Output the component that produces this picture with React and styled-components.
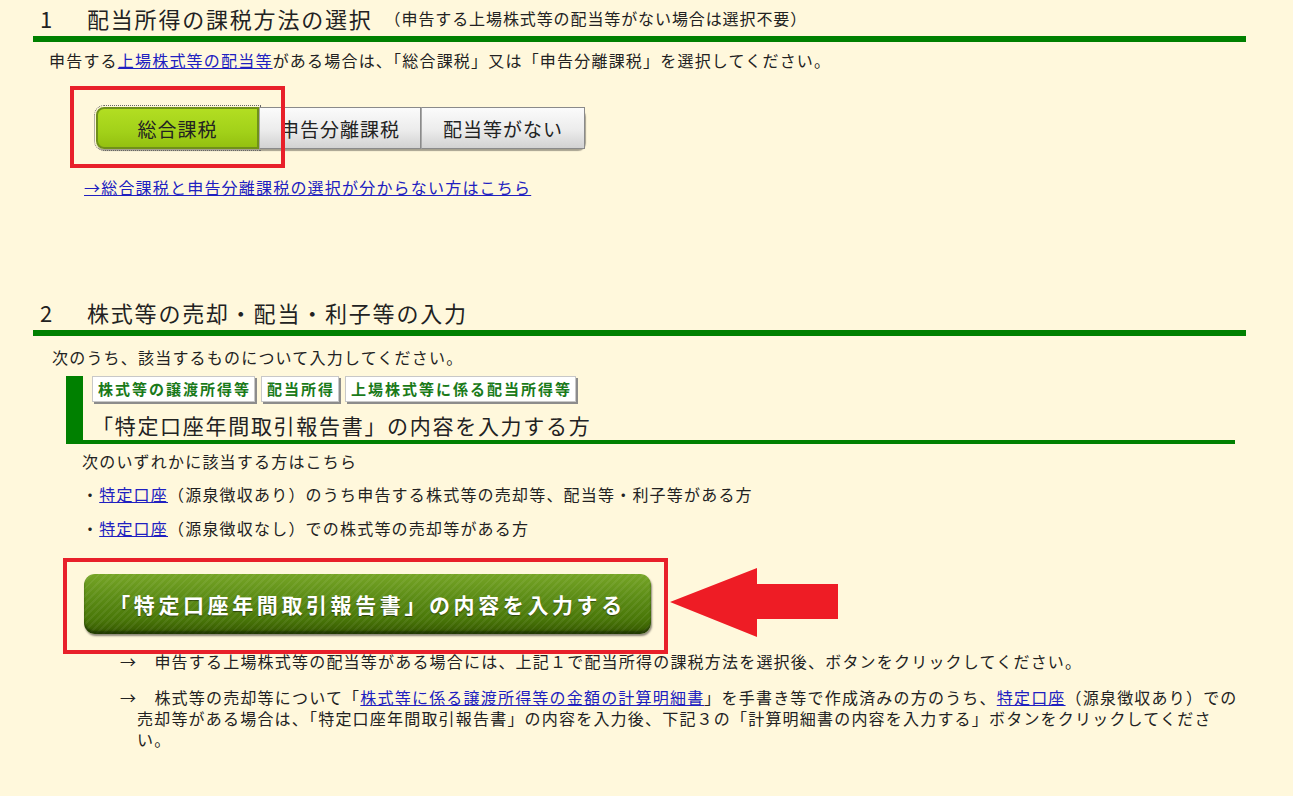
import React from 'react';
import styled, { createGlobalStyle } from 'styled-components';

const GlobalStyle = createGlobalStyle`
    html, body {
        margin: 0;
        background: #fff8dc;
    }
    body {
        font-family: 'Noto Sans CJK JP', 'Noto Sans', sans-serif;
        color: #222;
    }
`;

const Page = styled.div`
    width: 1213px;
    margin-left: 33px;
    min-height: 796px;
`;
const SectionHeading = styled.h2`
    display: flex;
    align-items: center;
    margin: ${(props) => props.$top || 0}px 0 0;
    height: 36px;
    padding-left: 7px;
    font-size: 22px;
    font-weight: normal;
    letter-spacing: 1.8px;
    white-space: nowrap;
`;
const Num = styled.span`
    display: inline-block;
    width: 47px;
`;
const HeadNote = styled.span`
    margin-left: 12px;
    font-size: 16px;
    letter-spacing: 0.9px;
`;
const GreenBar = styled.div`
    height: 6px;
    background: #008000;
`;
const Text = styled.p`
    margin: ${(props) => props.$top || 0}px 0 0 ${(props) => props.$indent || 0}px;
    font-size: 16px;
    line-height: 24px;
    letter-spacing: 1.2px;
    white-space: nowrap;
`;
const Link = styled.a`
    color: #2020c0;
    text-decoration: underline;
    cursor: pointer;
`;
const ChoiceRow = styled.div`
    display: flex;
    margin: 35px 0 0 63px;
`;
const ChoiceGroup = styled.div`
    position: relative;
    display: inline-flex;
    border-radius: 8px;
    box-shadow: 1px 2px 1px rgba(0, 0, 0, 0.35);
`;
const Choice = styled.button`
    all: unset;
    box-sizing: border-box;
    width: ${(props) => props.$width}px;
    height: 42px;
    text-align: center;
    font-family: 'Noto Sans CJK JP', sans-serif;
    font-size: 19px;
    letter-spacing: 1px;
    color: #222;
    border: 1px solid #8a8a8a;
    border-left-color: #a8a8a8;
    background: linear-gradient(#fbfbfb 0%, #ececec 55%, #d2d2d2 100%);
    cursor: pointer;
    &:first-child {
        border-radius: 8px 0 0 8px;
        border-left-color: #8a8a8a;
    }
    &:last-child {
        border-radius: 0 8px 8px 0;
    }
    &[aria-pressed='true'] {
        background: linear-gradient(#b2de22, #a2d119 60%, #94c010);
        border: 2px solid #70901a;
        outline: 1px dotted #666;
        outline-offset: 1px;
    }
`;
const Frame = styled.div`
    position: absolute;
    left: ${(props) => props.$x}px;
    top: ${(props) => props.$y}px;
    width: ${(props) => props.$w}px;
    height: ${(props) => props.$h}px;
    box-sizing: border-box;
    border: 4px solid #e8202a;
    pointer-events: none;
`;
const SubBlock = styled.div`
    box-sizing: border-box;
    width: 1169px;
    margin: 7px 0 0 33px;
    padding-left: 9px;
    border-left: 17px solid #008000;
    border-bottom: 4px solid #008000;
`;
const TagRow = styled.div`
    display: flex;
    gap: 6px;
    height: 28px;
`;
const Tag = styled.span`
    display: inline-block;
    height: 24px;
    padding: 0 3px 0 5px;
    line-height: 24px;
    background: #fff;
    border: 1px solid #c8c8c8;
    box-shadow: 2px 2px 0 #8c8c8c;
    color: #1a7a1a;
    font-size: 15px;
    font-weight: bold;
    letter-spacing: 2px;
`;
const BlockTitle = styled.div`
    padding-top: 6px;
    font-size: 21px;
    line-height: 30px;
    letter-spacing: 1.7px;
`;
const ButtonWrap = styled.div`
    position: relative;
    width: 567px;
    margin: 34px 0 0 51px;
`;
const BigButton = styled.button`
    all: unset;
    box-sizing: border-box;
    display: block;
    width: 567px;
    height: 60px;
    text-align: center;
    font-family: 'Noto Sans CJK JP', sans-serif;
    font-size: 21px;
    font-weight: bold;
    letter-spacing: 3.6px;
    color: #fff;
    text-shadow: 0 1px 1px rgba(0, 0, 0, 0.45);
    border-radius: 11px;
    background:
        repeating-linear-gradient(135deg, rgba(255, 255, 255, 0.06) 0 2px, transparent 2px 5px),
        linear-gradient(#76a526 0%, #5c8c16 40%, #497708 75%, #345500 100%);
    box-shadow: inset 0 -3px 2px rgba(20, 40, 0, 0.6), 1px 2px 2px rgba(0, 0, 0, 0.45);
    cursor: pointer;
`;
const Arrow = styled.svg`
    position: absolute;
    left: 586px;
    top: -6px;
`;
const Note = styled.p`
    box-sizing: border-box;
    width: ${(props) => props.$width || 1108}px;
    margin: ${(props) => props.$top}px 0 0 ${(props) => props.$indent}px;
    font-size: 16px;
    line-height: ${(props) => props.$line || 24}px;
    letter-spacing: 1.2px;
    text-indent: ${(props) => props.$hang || 0}px;
`;

const choices = [
    { label: '総合課税', width: 163, selected: true },
    { label: '申告分離課税', width: 162 },
    { label: '配当等がない', width: 164 },
];

function App() {
    return (
        <>
            <GlobalStyle />
            <Page>
                <SectionHeading>
                    <Num>1</Num>
                    配当所得の課税方法の選択
                    <HeadNote>（申告する上場株式等の配当等がない場合は選択不要）</HeadNote>
                </SectionHeading>
                <GreenBar />
                <Text $top={6} $indent={16}>
                    申告する<Link>上場株式等の配当等</Link>がある場合は、「総合課税」又は「申告分離課税」を選択してください。
                </Text>
                <ChoiceRow>
                    <ChoiceGroup>
                        {choices.map((c) => (
                            <Choice key={c.label} $width={c.width} aria-pressed={c.selected ? 'true' : 'false'}>
                                {c.label}
                            </Choice>
                        ))}
                        <Frame $x={-26} $y={-21} $w={215} $h={82} />
                    </ChoiceGroup>
                </ChoiceRow>
                <Text $top={26} $indent={51}>
                    <Link>→総合課税と申告分離課税の選択が分からない方はこちら</Link>
                </Text>

                <SectionHeading $top={95}>
                    <Num>2</Num>
                    株式等の売却・配当・利子等の入力
                </SectionHeading>
                <GreenBar />
                <Text $top={9} $indent={19}>
                    次のうち、該当するものについて入力してください。
                </Text>
                <SubBlock>
                    <TagRow>
                        <Tag>株式等の譲渡所得等</Tag>
                        <Tag>配当所得</Tag>
                        <Tag>上場株式等に係る配当所得等</Tag>
                    </TagRow>
                    <BlockTitle>「特定口座年間取引報告書」の内容を入力する方</BlockTitle>
                </SubBlock>
                <Text $top={5} $indent={49}>
                    次のいずれかに該当する方はこちら
                </Text>
                <Text $top={9} $indent={49}>
                    ・<Link>特定口座</Link>（源泉徴収あり）のうち申告する株式等の売却等、配当等・利子等がある方
                </Text>
                <Text $top={10} $indent={49}>
                    ・<Link>特定口座</Link>（源泉徴収なし）での株式等の売却等がある方
                </Text>
                <ButtonWrap>
                    <BigButton>「特定口座年間取引報告書」の内容を入力する</BigButton>
                    <Frame $x={-21} $y={-16} $w={605} $h={96} />
                    <Arrow width="168" height="70" viewBox="0 0 168 70">
                        <polygon points="0,34 87,0 87,16 168,16 168,51 87,51 87,69" fill="#ee1c25" />
                    </Arrow>
                </ButtonWrap>
                <Note $top={15} $indent={87} $width={1150}>
                    →　申告する上場株式等の配当等がある場合には、上記１で配当所得の課税方法を選択後、ボタンをクリックしてください。
                </Note>
                <Note $top={14} $indent={104} $line={21} $hang={-17}>
                    →　株式等の売却等について「<Link>株式等に係る譲渡所得等の金額の計算明細書</Link>」を手書き等で作成済みの方のうち、
                    <Link>特定口座</Link>（源泉徴収あり）での売却等がある場合は、「特定口座年間取引報告書」の内容を入力後、下記３の「計算明細書の内容を入力する」ボタンをクリックしてください。
                </Note>
            </Page>
        </>
    );
}

export default App;
